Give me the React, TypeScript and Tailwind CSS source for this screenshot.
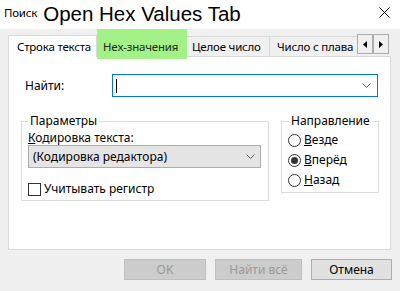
import React from 'react';

const font = "font-['Noto_Sans',sans-serif]";

const Chevron = ({ className = '' }: { className?: string }) => (
  <svg width="9" height="6" viewBox="0 0 9 6" className={className}>
    <path d="M0.5 0.5 L4.5 4.5 L8.5 0.5" fill="none" stroke="#5a5a5a" strokeWidth="1" />
  </svg>
);

const Radio = ({ checked, label }: { checked?: boolean; label: React.ReactNode }) => (
  <div className="flex items-center h-[20px]">
    <span className="w-[13px] h-[13px] rounded-full border border-[#333] bg-white flex items-center justify-center">
      {checked && <span className="w-[7px] h-[7px] rounded-full bg-[#333]" />}
    </span>
    <span className="ml-[3px]">{label}</span>
  </div>
);

const TabArrow = ({ dir }: { dir: 'l' | 'r' }) => (
  <div className="w-[16px] h-[20px] border border-[#adadad] bg-[#f0f0f0] flex items-center justify-center">
    <svg width="4" height="7" viewBox="0 0 4 7">
      {dir === 'l' ? <path d="M4 0 L0 3.5 L4 7 Z" fill="#000" /> : <path d="M0 0 L4 3.5 L0 7 Z" fill="#000" />}
    </svg>
  </div>
);

export default function App() {
  return (
    <div className={`w-[400px] h-[291px] bg-[#f0f0f0] flex flex-col text-[12px] leading-[16px] text-black ${font} overflow-hidden`}>
      {/* title bar */}
      <div className="h-[29px] bg-white flex items-center shrink-0">
        <span className="ml-[4px] text-[11.5px] mt-[-3px] tracking-[-0.2px]">Поиск</span>
        <span className="ml-[6px] text-[20.5px] leading-[24px] font-['Liberation_Sans',sans-serif] mt-[-2px]">Open Hex Values Tab</span>
        <svg width="11" height="11" viewBox="0 0 11 11" className="ml-auto mr-[10px] mt-[-4px]">
          <path d="M0.5 0.5 L10.5 10.5 M10.5 0.5 L0.5 10.5" stroke="#000" strokeWidth="1" />
        </svg>
      </div>

      {/* tabs */}
      <div className="relative flex items-end h-[27px] pl-[8px] shrink-0 whitespace-nowrap text-[11.5px] tracking-[-0.2px]">
        <div className="h-[22px] w-[89px] bg-white border border-b-0 border-[#d9d9d9] flex items-center pl-[8px] relative z-10 mb-[-1px]">
          Строка текста
        </div>
        <div className="h-[20px] w-[89px] border-t border-r border-[#d9d9d9] flex items-center pl-[6px]">
          <span className="relative z-30 text-[#1c2a14]">Hex-значения</span>
        </div>
        <div className="h-[20px] w-[84px] border-t border-r border-[#d9d9d9] flex items-center pl-[6px]">Целое число</div>
        <div className="h-[20px] w-[87px] border-t border-[#d9d9d9] flex items-center pl-[7px]">Число с плава</div>
        <div className="flex self-start mt-[5px]">
          <TabArrow dir="l" />
          <TabArrow dir="r" />
        </div>
        <div className="absolute left-[97px] top-0 w-[90px] h-[30px] bg-[#a3f288] z-20" />
      </div>

      {/* panel */}
      <div className="ml-[8px] w-[383px] h-[194px] bg-white border border-[#d9d9d9] shrink-0 flex flex-col">
        <div className="flex items-center mt-[17px] pl-[16px]">
          <span className="w-[87px]">Найти:</span>
          <div className="w-[266px] h-[23px] border border-[#0078d7] flex items-center">
            <span className="ml-[3px] w-[1px] h-[14px] bg-black" />
            <Chevron className="ml-auto mr-[6px]" />
          </div>
        </div>

        <div className="flex mt-[16px] pl-[12px]">
          <fieldset className="w-[248px] h-[88px] border border-[#dcdcdc] px-[6px]">
            <legend className="px-[2px] leading-[16px]">Параметры</legend>
            <div className="leading-[16px] mt-[1px]"><span className="underline">К</span>одировка текста:</div>
            <div className="mt-[-1px] w-[233px] h-[23px] bg-[#e5e5e5] border border-[#adadad] flex items-center pl-[4px]">
              (Кодировка редактора)
              <Chevron className="ml-auto mr-[5px]" />
            </div>
            <div className="flex items-center mt-[13px]">
              <span className="w-[13px] h-[13px] border border-[#333] bg-white" />
              <span className="ml-[3px]">Учитывать регистр</span>
            </div>
          </fieldset>

          <fieldset className="ml-[12px] w-[97px] h-[80px] border border-[#dcdcdc] px-[6px]">
            <legend className="px-[2px] leading-[16px] ml-[1px]">Направление</legend>
            <div className="mt-[1px]">
              <Radio label={<><span className="underline">В</span>езде</>} />
              <Radio checked label={<><span className="underline">В</span>перёд</>} />
              <Radio label={<><span className="underline">Н</span>азад</>} />
            </div>
          </fieldset>
        </div>
      </div>

      {/* buttons */}
      <div className="flex justify-end gap-[9px] mt-[9px] pr-[8px]">
        <button className="w-[82px] h-[21px] bg-[#cccccc] border border-[#bfbfbf] text-[#9a9a9a] flex items-center justify-center">OK</button>
        <button className="w-[87px] h-[21px] bg-[#cccccc] border border-[#bfbfbf] text-[#9a9a9a] flex items-center justify-center">Найти всё</button>
        <button className="w-[81px] h-[21px] bg-[#e1e1e1] border border-[#adadad] flex items-center justify-center">Отмена</button>
      </div>
    </div>
  );
}
